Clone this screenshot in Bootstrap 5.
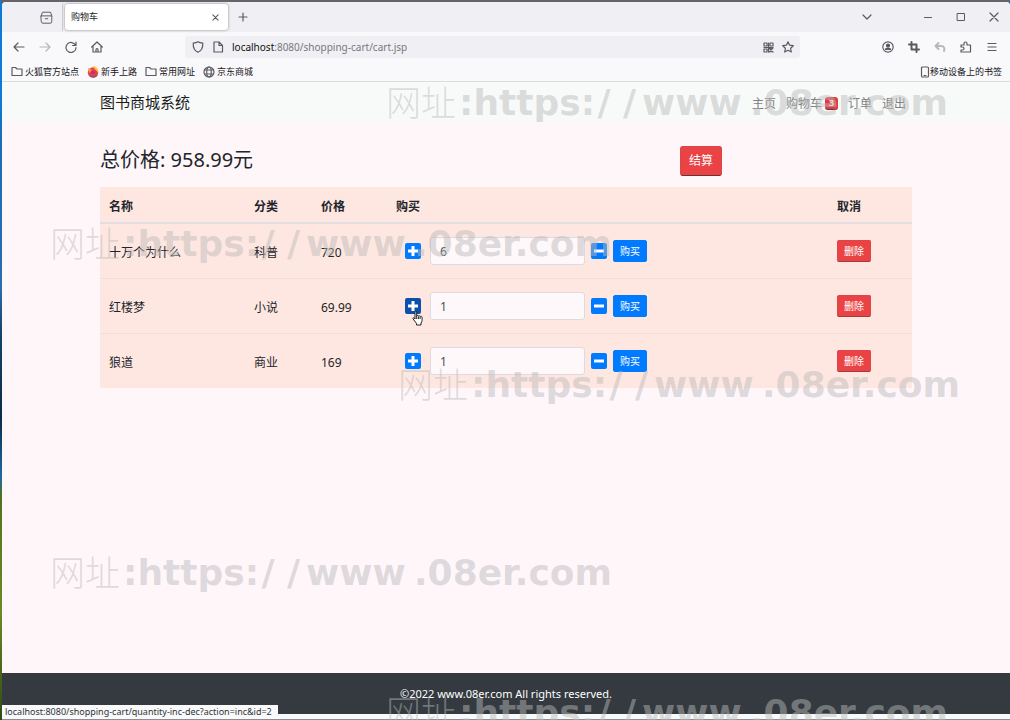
<!DOCTYPE html>
<html lang="zh-CN">
<head>
<meta charset="utf-8">
<meta name="viewport" content="width=device-width, initial-scale=1">
<title>购物车</title>
<link href="https://cdn.jsdelivr.net/npm/bootstrap@5.3.0/dist/css/bootstrap.min.css" rel="stylesheet">
<style>
  body {
    font-family: "Noto Sans", "Noto Sans CJK SC", sans-serif;
    font-size: 12px; line-height: 18px; color: #212529;
    background: linear-gradient(#0d7ad6 0 14%, #1c6cb4 20%, #2a6db0 40%, #16446c 46%, #0b2c48 58%, #1d67a6 66%, #51731f 69%, #6b8a24 85%, #2f4a16);
  }
  svg { display: block; fill: none; stroke: #5a5a62; stroke-width: 1.2; stroke-linecap: round; stroke-linejoin: round; flex: none; }
  .desktop { padding: 0 0 0 2px; min-height: 100vh; border-top: 2px solid #66636a; }
  .browser { border-radius: 4px 4px 0 0; background: #f9f9fb; overflow: hidden; border-bottom: 1px solid #8b8d90; }
  .tool { border: 0; background: none; padding: 0; width: 26px; height: 24px; display: flex; align-items: center; justify-content: center; }
  .tool .faint { stroke: #b6b6bc; }
  .tool .bold { stroke-width: 2; }
  .tabs { height: 30px; background: #f0f0f4; padding-left: 31px; }
  .rule { width: 1px; height: 28px; background: #cfcfd6; margin-left: 3px; }
  .tab { width: 163px; height: 26px; margin: 0 2px; padding: 0 0 0 6px; background: #fff; border-radius: 3px; box-shadow: 0 0 3px #888; font-size: 9px; color: #222; }
  .all { margin-right: 31px; }
  .win { width: 33px; }
  .toolbar { height: 30px; padding: 0 5px 0 4px; }
  .address { height: 22px; background: #f0f0f4; border-radius: 3px; margin: 0 75px; padding: 0 6px 0 7px; gap: 8px; }
  .host { font-size: 10px; color: #77777c; white-space: nowrap; line-height: 14px; text-decoration: none; }
  .host b { font-weight: 400; color: #111; }
  .marks { height: 20px; padding: 0 8px 0 9px; gap: 8px; font-size: 9px; border-bottom: 1px solid #d9dfdd; }
  .marks a { color: #15141a; text-decoration: none; display: flex; align-items: center; gap: 2px; line-height: 14px; }
  .shop { max-width: 836px; }
  .topnav { background: #f8faf9; height: 39px; padding: 0; }
  .topnav .navbar-brand { font-size: 15px; line-height: 22px; padding: 0; color: #1b1d1f; }
  .topnav .navbar-nav { gap: 10px; margin-right: 6px; }
  .topnav .navbar-nav .nav-link { padding: 4px 0 0; color: #7b7d7e; display: flex; align-items: center; gap: 3px; }
  .count { font-size: 9px; line-height: 12px; padding: 0; width: 13px; border-radius: 3px; background: #e53b40; border-bottom: 1px solid #733; }
  main { background: #fff6fa; }
  .total { display: grid; grid-template-columns: 5fr 2fr; align-items: center; justify-items: start; padding: 25px 0 11px; }
  .total h1 { font-size: 20px; line-height: 26px; font-weight: 400; margin: 0; padding-bottom: 3px; }
  .btn { --bs-btn-font-size: 10px; --bs-btn-line-height: 16px; --bs-btn-border-radius: 2px; padding: 2px 6px; border-width: 1px; }
  .btn-danger { --bs-btn-bg: #ea4345; --bs-btn-border-color: #e04446; border-bottom-color: #a33c40; }
  .btn-primary { --bs-btn-bg: #007bff; --bs-btn-border-color: #007bff; }
  .pay { --bs-btn-font-size: 12px; --bs-btn-line-height: 18px; padding: 5px 8px; border-radius: 3px; border-bottom-color: #633; }
  .cart { table-layout: fixed; margin: 0; --bs-table-bg: #ffe7e1; --bs-table-color: #212529; }
  .cart > :not(caption) > * > * { padding: 0 9px; vertical-align: middle; border-color: #f1dddb; }
  .cart thead th { height: 36px; border-bottom: 2px solid #e2dde0; padding-top: 5px; }
  .cart tbody td { height: 55px; }
  .cart tbody td:nth-child(-n+3) { padding-top: 4px; }
  .cart tbody tr:last-child td { border-bottom: 0; }
  .c-name { width: 145px } .c-kind { width: 67px } .c-price { width: 75px } .c-drop { width: 84px }
  .qty { gap: 6px; padding-left: 9px; }
  .qty .form-control { width: 155px; height: 28px; margin-left: 3px; padding: 2px 9px 0; font-size: 12px; border-radius: 3px; background: #fff8fb; border-color: #dfd9e0; color: #495057; }
  .step { width: 16px; height: 16px; padding: 0; border: 0; background: #007bff; border-radius: 2px; position: relative; }
  .step.hot { background: #0a51ad; }
  .step svg { stroke: #fff; stroke-width: 3; stroke-linecap: butt; }
  .step .hand { position: absolute; left: 7px; top: 12px; stroke: #222; fill: #fff; stroke-width: 1; z-index: 2; }
  footer { background: #343a40; color: #fff; height: 41px; font-size: 11px; line-height: 40px; border-top: 1px solid #3b3539; }
  .rim { height: 5px; background: #f7fafb; }
  .status { position: absolute; left: 2px; bottom: 1px; background: #f8f9fb; color: #333; font-size: 9px; line-height: 14px; padding: 0 6px 0 3px; z-index: 3; }
  .marksheet { position: absolute; inset: 0; overflow: hidden; pointer-events: none; z-index: 4; }
  .wm { position: absolute; display: grid; grid-template-columns: 73px 132px 26px 25px 102px 204px; font: 700 36px/42px "DejaVu Sans", sans-serif; color: rgba(186,186,186,.48); white-space: nowrap; }
  .wm i { font: 300 35px/38px "Noto Sans CJK SC", sans-serif; }
  .wm s { text-decoration: none; text-align: center; }
  .wm span:last-child { text-align: right; }
  .w1 { left: 386px; top: 82px } .w2 { left: 50px; top: 223px } .w3 { left: 398px; top: 364px }
  .w4 { left: 50px; top: 552px } .w5 { left: 386px; top: 692px }
</style>
</head>
<body>
<div class="desktop d-flex flex-column position-relative">
<div class="browser flex-grow-1 d-flex flex-column">

  <div class="tabs d-flex align-items-center">
    <button class="tool" aria-label="标签页"><svg width="13" height="13" viewBox="0 0 16 16"><path d="M1.500 6h13v7a2 2 0 0 1-2 2h-9a2 2 0 0 1-2-2zM1.500 6l1.500-4.500h10L14.500 6M6.500 9.500h3"/></svg></button>
    <div class="rule"></div>
    <div class="tab d-flex align-items-center justify-content-between"><span>购物车</span><button class="tool" aria-label="关闭标签页"><svg width="7" height="7" viewBox="0 0 8 8"><path d="M1 1l6 6M7 1l-6 6"/></svg></button></div>
    <button class="tool" aria-label="新标签页"><svg width="10" height="10" viewBox="0 0 10 10"><path d="M5 1v8M1 5h8"/></svg></button>
    <button class="tool all ms-auto" aria-label="所有标签页"><svg width="10" height="10" viewBox="0 0 10 10"><path d="M1 3l4 4 4-4"/></svg></button>
    <button class="tool win" aria-label="最小化"><svg width="10" height="10" viewBox="0 0 10 10"><path d="M1.500 5.500h7"/></svg></button>
    <button class="tool win" aria-label="最大化"><svg width="10" height="10" viewBox="0 0 10 10"><rect x="1.500" y="1.500" width="7" height="7" stroke-width="1"/></svg></button>
    <button class="tool win" aria-label="关闭"><svg width="10" height="10" viewBox="0 0 10 10"><path d="M1 1l8 8M9 1l-8 8"/></svg></button>
  </div>

  <div class="toolbar d-flex align-items-center">
    <button class="tool" aria-label="后退"><svg width="12" height="12" viewBox="0 0 12 12"><path d="M11 6H1M5 2L1 6l4 4"/></svg></button>
    <button class="tool" aria-label="前进"><svg class="faint" width="12" height="12" viewBox="0 0 12 12"><path d="M1 6h10M7 2l4 4-4 4"/></svg></button>
    <button class="tool" aria-label="刷新"><svg width="12" height="12" viewBox="0 0 12 12"><path d="M10.500 4.300A5 5 0 1 0 11 6.500M11 1v3.500H7.500"/></svg></button>
    <button class="tool" aria-label="主页"><svg width="12" height="12" viewBox="0 0 12 12"><path d="M.7 6L6 1l5.300 5M2 5v6h8V5M5 11V8.500a1 1 0 0 1 2 0V11"/></svg></button>
    <div class="address flex-grow-1 d-flex align-items-center">
      <svg width="12" height="12" viewBox="0 0 12 12"><path d="M6 .8C4.500 1.800 3 2 1.200 2.200 1 6.500 2.200 9.500 6 11.300 9.800 9.500 11 6.500 10.800 2.200 9 2 7.500 1.800 6 .8z"/></svg>
      <svg width="12" height="12" viewBox="0 0 12 12"><path d="M2 1h5l3.500 3.500V11H2zM7 1v3.500h3.500"/></svg>
      <a class="host me-auto" href="#"><b>localhost</b>:8080/shopping-cart/cart.jsp</a>
      <svg width="11" height="11" viewBox="0 0 11 11"><path d="M1 1h3v3H1zM7 1h3v3H7zM1 7h3v3H1zM6 6l4 4M10 6L6 10M5.500 1v9M1 5.500h9M8 6v4"/></svg>
      <svg width="12" height="12" viewBox="0 0 12 12"><path d="M6 .8l1.600 3.400 3.700.5-2.700 2.600.7 3.700L6 9.200 2.700 11l.7-3.700L.7 4.700l3.700-.5z"/></svg>
    </div>
    <button class="tool" aria-label="账户"><svg width="12" height="12" viewBox="0 0 12 12"><circle cx="6" cy="6" r="5.200"/><circle cx="6" cy="4.500" r="1.500" fill="#4a4a52"/><path d="M3.500 8.500c0-2 5-2 5 0z" fill="#4a4a52"/></svg></button>
    <button class="tool" aria-label="截图"><svg class="bold" width="12" height="12" viewBox="0 0 12 12"><path d="M3.500 1v7.500H11M1 3.500h7.500V11"/></svg></button>
    <button class="tool" aria-label="撤销"><svg class="faint bold" width="12" height="12" viewBox="0 0 12 12"><path d="M4.500 2L1.500 5l3 3M2 5h5c3 0 4 2 3 5"/></svg></button>
    <button class="tool" aria-label="扩展"><svg width="12" height="12" viewBox="0 0 12 12"><path d="M1 4h3V2.500a1.500 1.500 0 0 1 3 0V4h3.500v7H1V9h1.500a1.500 1.500 0 0 0 0-3H1z"/></svg></button>
    <button class="tool" aria-label="菜单"><svg width="10" height="10" viewBox="0 0 10 10"><path d="M1 1.500h8M1 5h8M1 8.500h8"/></svg></button>
  </div>

  <div class="marks d-flex align-items-center">
    <a href="#"><svg width="12" height="11" viewBox="0 0 12 11"><path d="M1 9.500V1.500h3.500L6 3h5v6.500z"/></svg>火狐官方站点</a>
    <a href="#"><svg width="12" height="12" viewBox="0 0 12 12" style="stroke:none"><circle cx="6" cy="6.500" r="5.200" fill="#e8404e"/><path d="M6 0c4 0 6 4 5.200 7.500C10 3.500 7 4 6 0z" fill="#ffc53a"/><path d="M1 5c0 5 7 7 10 3-1 5-9 5-10-3z" fill="#6f5a7c"/><circle cx="6" cy="6.500" r="1.800" fill="#b8327a"/><path d="M1 2l4 2-3 3z" fill="#ff9a3a"/></svg>新手上路</a>
    <a href="#"><svg width="12" height="11" viewBox="0 0 12 11"><path d="M1 9.500V1.500h3.500L6 3h5v6.500z"/></svg>常用网址</a>
    <a href="#"><svg width="12" height="12" viewBox="0 0 12 12"><circle cx="6" cy="6" r="5"/><ellipse cx="6" cy="6" rx="2.300" ry="5"/><path d="M1.500 4h9M1.500 8h9"/></svg>京东商城</a>
    <a class="ms-auto gap-0" href="#"><svg width="10" height="12" viewBox="0 0 10 12"><rect x="1.500" y="1" width="7" height="10" rx="1"/><path d="M4 9.500h2"/></svg>移动设备上的书签</a>
  </div>

  <nav class="topnav navbar navbar-expand">
    <div class="container shop">
      <a class="navbar-brand" href="#">图书商城系统</a>
      <div class="navbar-nav ms-auto">
        <a class="nav-link" href="#">主页</a>
        <a class="nav-link" href="#">购物车<span class="badge count">3</span></a>
        <a class="nav-link" href="#">订单</a>
        <a class="nav-link" href="#">退出</a>
      </div>
    </div>
  </nav>

  <main class="flex-grow-1">
    <div class="container shop">
      <div class="total">
        <h1>总价格: 958.99元</h1>
        <button class="btn btn-danger pay">结算</button>
      </div>
      <table class="table cart">
        <thead><tr><th class="c-name">名称</th><th class="c-kind">分类</th><th class="c-price">价格</th><th>购买</th><th class="c-drop">取消</th></tr></thead>
        <tbody>
          <tr><td>十万个为什么</td><td>科普</td><td>720</td>
            <td><form class="qty d-flex align-items-center">
              <button type="button" class="step" aria-label="增加"><svg width="16" height="16" viewBox="0 0 16 16"><path d="M8 3v10M3 8h10"/></svg></button>
              <input class="form-control" type="text" value="6" aria-label="数量">
              <button type="button" class="step" aria-label="减少"><svg width="16" height="16" viewBox="0 0 16 16"><path d="M3 8h10"/></svg></button>
              <button type="button" class="btn btn-primary">购买</button></form></td>
            <td><button class="btn btn-danger">删除</button></td></tr>
          <tr><td>红楼梦</td><td>小说</td><td>69.99</td>
            <td><form class="qty d-flex align-items-center">
              <button type="button" class="step hot" aria-label="增加"><svg width="16" height="16" viewBox="0 0 16 16"><path d="M8 3v10M3 8h10"/></svg><svg class="hand" width="11" height="16" viewBox="0 0 11 16"><path d="M3 9V2c0-1.500 1.700-1.500 1.700 0v4c.3-.8 1.600-.7 1.700.2.400-.7 1.600-.5 1.700.4.500-.6 2-.4 2 .7 0 3 .2 4-1.100 5.700V15H4.500v-1.500C3.500 12 2 10.500 1 8.700.6 7.500 2 7.300 3 9zM4.700 6v3M6.400 6.500V9M8.100 7v2"/></svg></button>
              <input class="form-control" type="text" value="1" aria-label="数量">
              <button type="button" class="step" aria-label="减少"><svg width="16" height="16" viewBox="0 0 16 16"><path d="M3 8h10"/></svg></button>
              <button type="button" class="btn btn-primary">购买</button></form></td>
            <td><button class="btn btn-danger">删除</button></td></tr>
          <tr><td>狼道</td><td>商业</td><td>169</td>
            <td><form class="qty d-flex align-items-center">
              <button type="button" class="step" aria-label="增加"><svg width="16" height="16" viewBox="0 0 16 16"><path d="M8 3v10M3 8h10"/></svg></button>
              <input class="form-control" type="text" value="1" aria-label="数量">
              <button type="button" class="step" aria-label="减少"><svg width="16" height="16" viewBox="0 0 16 16"><path d="M3 8h10"/></svg></button>
              <button type="button" class="btn btn-primary">购买</button></form></td>
            <td><button class="btn btn-danger">删除</button></td></tr>
        </tbody>
      </table>
    </div>
  </main>

  <footer class="text-center">©2022 www.08er.com All rights reserved.</footer>
  <div class="rim"></div>
</div>
<div class="status">localhost:8080/shopping-cart/quantity-inc-dec?action=inc&amp;id=2</div>
</div>

<div class="marksheet">
  <div class="wm w1"><i>网址</i><span>:https:</span><s>/</s><s>/</s><span>www</span><span>.08er.com</span></div>
  <div class="wm w2"><i>网址</i><span>:https:</span><s>/</s><s>/</s><span>www</span><span>.08er.com</span></div>
  <div class="wm w3"><i>网址</i><span>:https:</span><s>/</s><s>/</s><span>www</span><span>.08er.com</span></div>
  <div class="wm w4"><i>网址</i><span>:https:</span><s>/</s><s>/</s><span>www</span><span>.08er.com</span></div>
  <div class="wm w5"><i>网址</i><span>:https:</span><s>/</s><s>/</s><span>www</span><span>.08er.com</span></div>
</div>
<script src="https://cdn.jsdelivr.net/npm/bootstrap@5.3.0/dist/js/bootstrap.bundle.min.js"></script>
</body>
</html>
